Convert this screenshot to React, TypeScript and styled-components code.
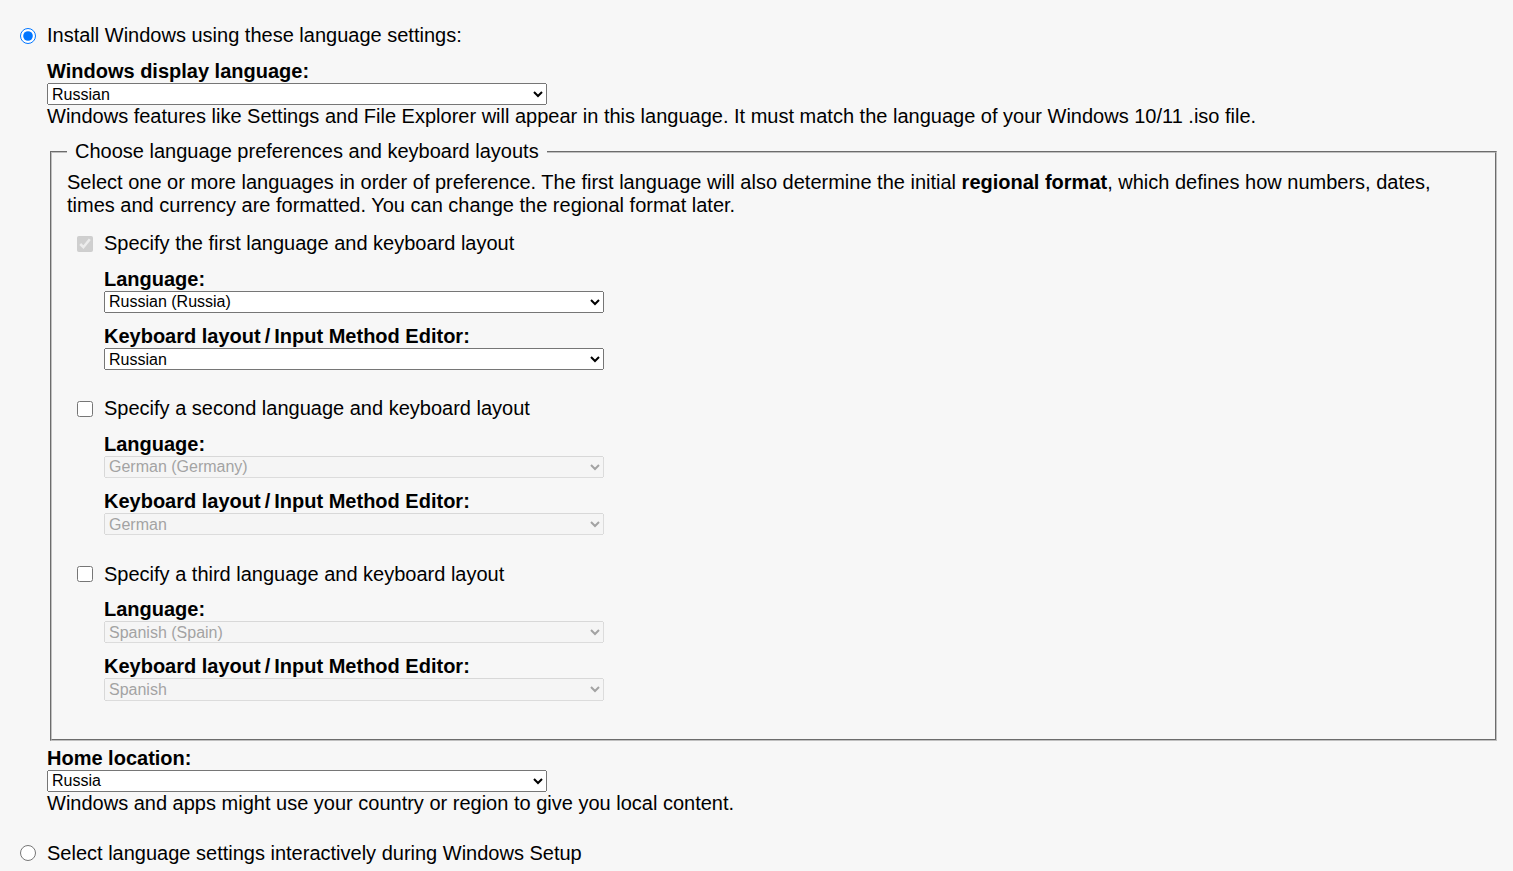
import React from "react";
import styled, { createGlobalStyle } from "styled-components";

const Global = createGlobalStyle`
  html, body { margin: 0; padding: 0; }
  body {
    background: #f7f7f7;
    color: #000;
    font-family: "Liberation Sans", Arial, sans-serif;
    font-size: 20px;
    line-height: 23px;
  }
`;

const Page = styled.div`
  padding: 24px 16px 0 20px;
`;

const OptionRow = styled.label<{ $top?: number }>`
  display: flex;
  align-items: center;
  margin-top: ${(p) => p.$top ?? 0}px;
`;

const Radio = styled.input.attrs({ type: "radio" })`
  width: 16px;
  height: 16px;
  margin: 0 11px 0 0;
  flex: none;
`;

const Indent = styled.div`
  margin-left: 27px;
`;

const FieldLabel = styled.div<{ $top?: number }>`
  font-weight: bold;
  margin-top: ${(p) => p.$top ?? 12}px;
`;

const Select = styled.select`
  display: block;
  width: 500px;
  height: 22.34px;
  font-family: "Liberation Sans", Arial, sans-serif;
  font-size: 16px;
  margin: 0;
`;

const Help = styled.div``;

const Fieldset = styled.fieldset`
  margin: 12px 0 0 3px;
  border: 2px groove #c0c0c0;
  padding: 8px 15px 26px 15px;
`;

const Legend = styled.legend`
  padding: 0 8px;
  margin-left: 0;
`;

const Para = styled.p`
  margin: 0;
`;

const Section = styled.div`
  padding-bottom: 12px;
`;

const CheckRow = styled.label`
  display: flex;
  align-items: center;
  height: 23.67px;
  margin-top: 14.75px;
  margin-left: 10px;
`;

const Check = styled.input.attrs({ type: "checkbox" })`
  width: 16px;
  height: 16px;
  margin: 0 11px 0 0;
  flex: none;
`;

const SubBlock = styled.div`
  margin-left: 37px;
`;

type Lang = { title: string; lang: string; kb: string; enabled: boolean };

const langs: Lang[] = [
  { title: "Specify the first language and keyboard layout", lang: "Russian (Russia)", kb: "Russian", enabled: true },
  { title: "Specify a second language and keyboard layout", lang: "German (Germany)", kb: "German", enabled: false },
  { title: "Specify a third language and keyboard layout", lang: "Spanish (Spain)", kb: "Spanish", enabled: false },
];

export default function App() {
  return (
    <Page>
      <Global />
      <OptionRow>
        <Radio name="mode" defaultChecked />
        Install Windows using these language settings:
      </OptionRow>
      <Indent>
        <FieldLabel $top={13}>Windows display language:</FieldLabel>
        <Select defaultValue="Russian">
          <option>Russian</option>
        </Select>
        <Help>
          Windows features like Settings and File Explorer will appear in this language. It must match the language of
          your Windows 10/11 .iso file.
        </Help>
        <Fieldset>
          <Legend>Choose language preferences and keyboard layouts</Legend>
          <Para>
            Select one or more languages in order of preference. The first language will also determine the initial{" "}
            <b>regional format</b>, which defines how numbers, dates, times and currency are formatted. You can change
            the regional format later.
          </Para>
          {langs.map((l, i) => (
            <Section key={l.title}>
              <CheckRow>
                <Check defaultChecked={i === 0} disabled={i === 0} />
                {l.title}
              </CheckRow>
              <SubBlock>
                <FieldLabel>Language:</FieldLabel>
                <Select disabled={!l.enabled} defaultValue={l.lang}>
                  <option>{l.lang}</option>
                </Select>
                <FieldLabel>Keyboard layout{"\u2009/\u2009"}Input Method Editor:</FieldLabel>
                <Select disabled={!l.enabled} defaultValue={l.kb}>
                  <option>{l.kb}</option>
                </Select>
              </SubBlock>
            </Section>
          ))}
        </Fieldset>
        <FieldLabel $top={6}>Home location:</FieldLabel>
        <Select defaultValue="Russia">
          <option>Russia</option>
        </Select>
        <Help>Windows and apps might use your country or region to give you local content.</Help>
      </Indent>
      <OptionRow $top={27}>
        <Radio name="mode" />
        Select language settings interactively during Windows Setup
      </OptionRow>
    </Page>
  );
}
